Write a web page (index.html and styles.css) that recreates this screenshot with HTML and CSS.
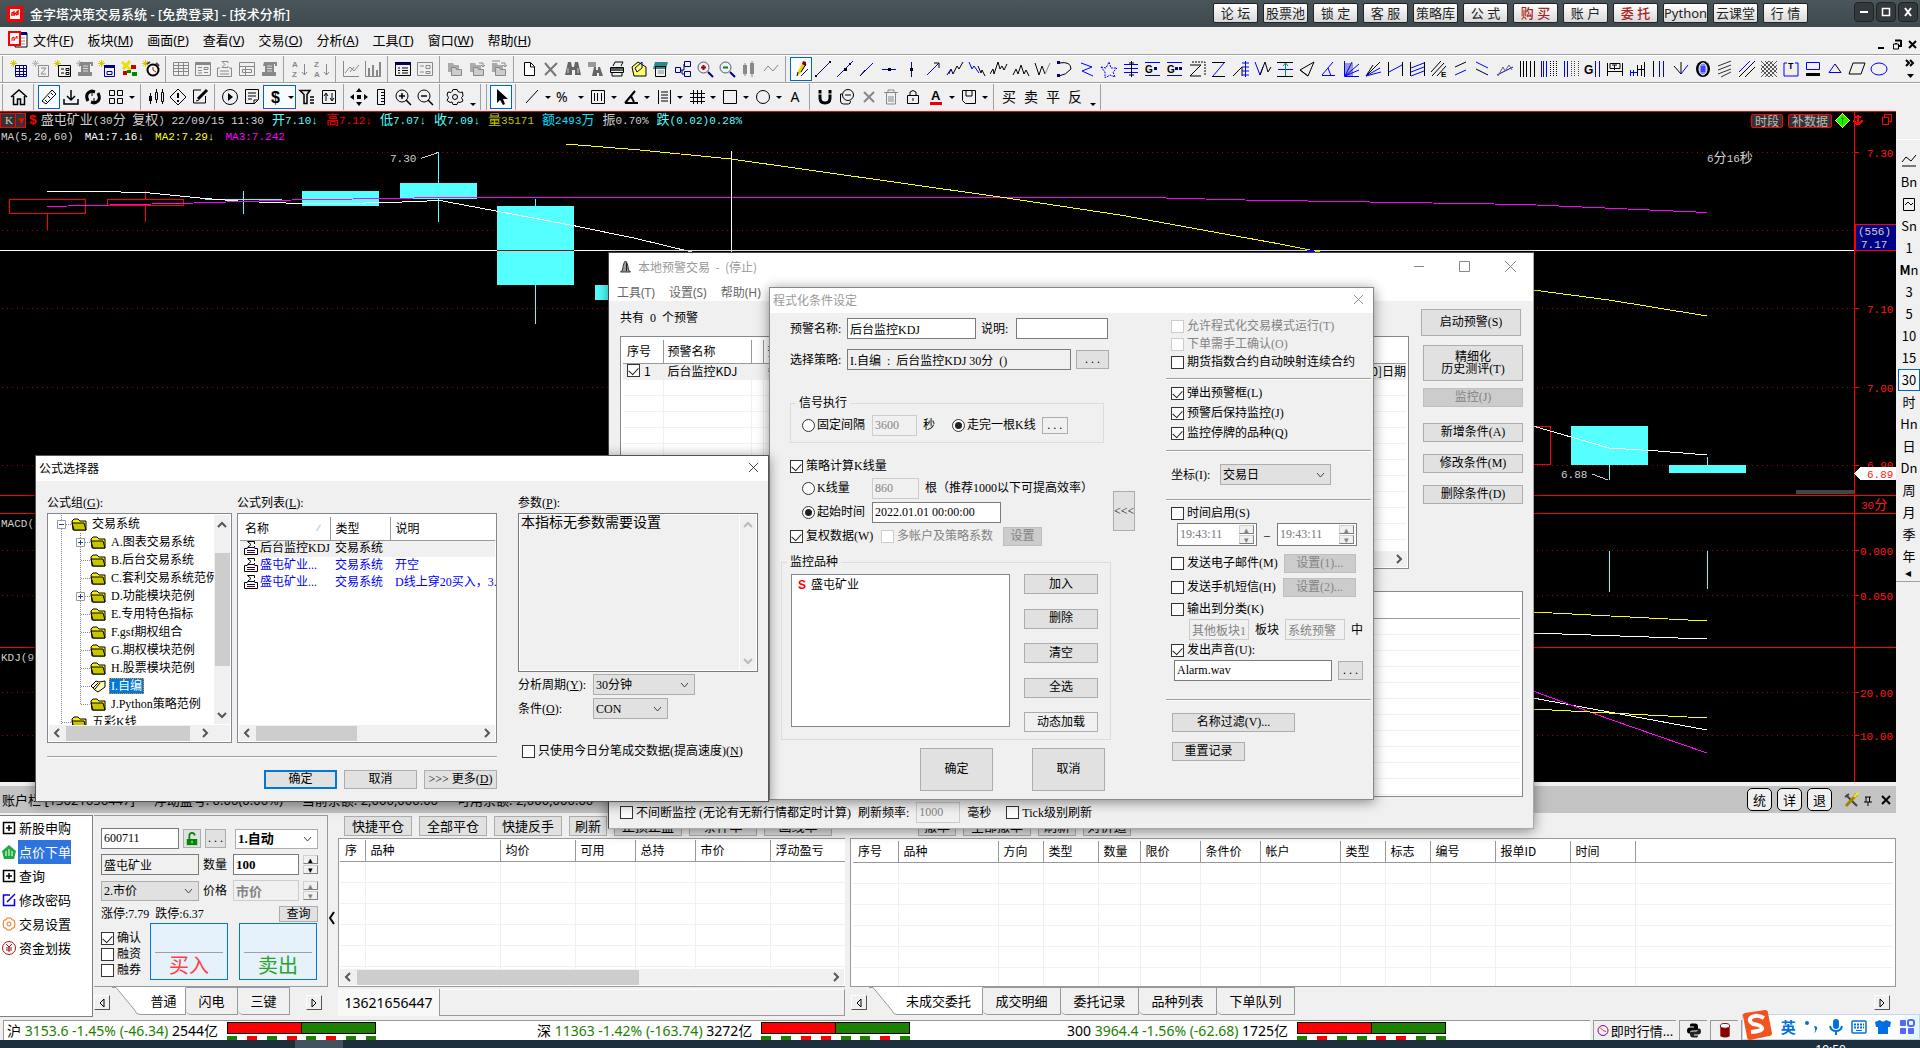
FILE: index.html
```html
<!DOCTYPE html>
<html lang="zh-CN">
<head>
  <meta charset="UTF-8" />
  <title>金字塔决策交易系统</title>
  <link rel="stylesheet" href="styles.css">
</head>
<body>

  <!-- shared symbols -->
  <svg class="sprite">
    <symbol id="close" viewBox="0 0 12 12"><path d="M1 1l10 10M11 1L1 11" fill="none" stroke="currentColor"/></symbol>
    <symbol id="left" viewBox="0 0 8 10"><path d="M6 1L2 5l4 4" fill="none" stroke="#555" stroke-width="2"/></symbol>
    <symbol id="right" viewBox="0 0 8 10"><path d="M2 1l4 4-4 4" fill="none" stroke="#555" stroke-width="2"/></symbol>
    <symbol id="up" viewBox="0 0 10 8"><path d="M1 6l4-4 4 4" fill="none" stroke="currentColor" stroke-width="2"/></symbol>
    <symbol id="down" viewBox="0 0 10 8"><path d="M1 2l4 4 4-4" fill="none" stroke="currentColor" stroke-width="2"/></symbol>
    <symbol id="tri-l" viewBox="0 0 6 10"><path d="M5 1v8L1 5z" fill="none" stroke="#000"/></symbol>
    <symbol id="tri-r" viewBox="0 0 6 10"><path d="M1 1v8l4-4z" fill="none" stroke="#000"/></symbol>
    <symbol id="folder" viewBox="0 0 17 13"><path d="M1 3l2-2h4l2 2h6v9H2z" fill="#f4f000" stroke="#000"/><path d="M1 5h12l2 7H3z" fill="#c9c400" stroke="#000"/></symbol>
    <symbol id="open" viewBox="0 0 17 13"><path d="M1 6l5-5 3 1 6-1v6l-7 5-3-2z" fill="#fffbb0" stroke="#000"/><path d="M3 8l5-5M5 9l5-6" stroke="#000" fill="none"/></symbol>
    <symbol id="line" viewBox="0 0 21 18"><path d="M11.500 0v18M12 9.500h9" fill="none" stroke="#888" stroke-dasharray="1 1"/></symbol>
    <symbol id="line-end" viewBox="0 0 21 18"><path d="M11.500 0v9.500h9" fill="none" stroke="#888" stroke-dasharray="1 1"/></symbol>
    <symbol id="line-plus" viewBox="0 0 21 18"><path d="M11.500 0v18M16 9.500h5" fill="none" stroke="#888" stroke-dasharray="1 1"/><path d="M7.500 5.500h8v8h-8z" fill="#fff" stroke="#999"/><path d="M9 9.500h5M11.500 7v5" stroke="#248"/></symbol>
    <symbol id="line-minus" viewBox="0 0 21 18"><path d="M11.500 0v18M16 9.500h5" fill="none" stroke="#888" stroke-dasharray="1 1"/><path d="M7.500 5.500h8v8h-8z" fill="#fff" stroke="#999"/><path d="M9 9.500h5" stroke="#248"/></symbol>
    <symbol id="sigma" viewBox="0 0 14 14"><path d="M3.500 7.500h-3v6h13v-6h-3" fill="#fff" stroke="#000"/><path d="M10.500 3V.5h-7l3.500 3-3.500 3h7V5" fill="none" stroke="#000"/><path d="M3 9.500h8" stroke="#008"/><path d="M3 11.500h8" stroke="#600"/></symbol>
  </svg>

  <header class="titlebar">
    <svg class="logo" viewBox="0 0 16 16"><path fill="#f00" d="M0 0h16v16H0z"/><path fill="#fff" d="M3 3h10v10H3z"/><path d="M5 10V7l2-1v4M7 9l4-4v3l-2 1" fill="none" stroke="#f00" stroke-width="1.500"/></svg>
    <div class="app-name">金字塔决策交易系统 - [免费登录] - [技术分析]</div>
    <nav class="quick">
      <button>论 坛</button><button>股票池</button><button>锁 定</button><button>客 服</button><button>策略库</button><button>公 式</button><button class="hot">购 买</button><button>账 户</button><button class="hot">委 托</button><button>Python</button><button>云课堂</button><button>行 情</button>
    </nav>
    <div class="win-btns">
      <button aria-label="最小化"><svg viewBox="0 0 12 12"><path d="M2 6h8" stroke="#fff" stroke-width="2"/></svg></button>
      <button aria-label="最大化"><svg viewBox="0 0 12 12"><path d="M2.500 2.500h7v7h-7z" fill="none" stroke="#fff" stroke-width="1.500"/></svg></button>
      <button aria-label="关闭"><svg viewBox="0 0 12 12"><path d="M3 2l6 8M9 2L3 10" stroke="#fff" stroke-width="2"/></svg></button>
    </div>
  </header>

  <nav class="menubar">
    <svg class="doc-logo" viewBox="0 0 20 18"><path d="M7 2h12v14H7z" fill="#fff" stroke="#000"/><path d="M7 1h12v3H7z" fill="#008"/><path d="M13 7h4M13 10h4M13 13h4" stroke="#888"/><path d="M1 1h11v13H1z" fill="#fff" stroke="#f00" stroke-width="2"/><path d="M4 10V7l2-1v4M6 9l3-4v3" stroke="#f00" fill="none"/></svg>
    <a href="#">文件(<u>F</u>)</a><a href="#">板块(<u>M</u>)</a><a href="#">画面(<u>P</u>)</a><a href="#">查看(<u>V</u>)</a><a href="#">交易(<u>O</u>)</a><a href="#">分析(<u>A</u>)</a><a href="#">工具(<u>T</u>)</a><a href="#">窗口(<u>W</u>)</a><a href="#">帮助(<u>H</u>)</a>
    <svg class="mdi" viewBox="0 0 40 12"><path d="M1 9h6M18 1.500h6M19 7V4M24 1v6h-2" stroke="#000" stroke-width="2" fill="none"/><path d="M16.500 5h5v5h-5z" fill="#f0f0f0" stroke="#000"/><path d="M32 2l7 7M39 2l-7 7" stroke="#000" stroke-width="2"/></svg>
  </nav>
  <div class="toolbar" id="drawBar"></div>
  <div class="toolbar second" id="chartBar"></div>

  <div class="workspace">
    <div class="left-side">

      <section class="chart">
        <svg class="plot" viewBox="0 111 1896 671" preserveAspectRatio="xMinYMin slice">
          <g class="dots">
            <path d="M2 152.500h1852M2 230.500h1852M2 308.500h1852M2 387.500h1852M2 465.500h1852M2 550.500h1852M2 595.500h1852M2 692.500h1852M2 735.500h1852"/>
          </g>
          <g class="axis">
            <path d="M0 111.500h1896M1854.500 111v671M0 495.500h1896M0 513.500h1896M0 647.500h1896M1854 152.500h5M1854 308.500h5M1854 387.500h5M1854 465.500h5M1854 550.500h5M1854 595.500h5M1854 692.500h5M1854 735.500h5"/>
          </g>
          <g class="up-bar">
            <path d="M9.500 199.500h76v14h-76zM47.500 214v16M107.500 199.500h76v6h-76zM145.500 191v8M145.500 206v16M1473.500 426.500h77v38h-77z"/>
          </g>
          <g class="down-bar">
            <path d="M205 199h77v1h-77zM243 191h1v23h-1zM302 191h77v15h-77zM400 183h77v16h-77zM438 152h1v70h-1zM497 206h77v79h-77zM535 199h1v125h-1zM595 285h77v15h-77zM1571 426h77v39h-77zM1609 465h1v15h-1zM1669 465h77v8h-77zM1707 457h1v8h-1zM1609 551h1v41h-1zM1707 551h1v38h-1z"/>
          </g>
          <g class="ma">
            <path stroke="#fff" d="M47 191.500h50l48 1 60 6 40 3 55 2h40l50-1 50-2 133 25 63 13 58 14M1474 405l59 21 76 22 49 3 49 4M1400 630l133 3 174 6M1480 686l53 12 76 14 98 18"/>
            <path stroke="#f0f" d="M47 206.500l147-3.500 98-3 122-2 186-.5h546l99 2.500 280 4.500 182 8M1480 667l53 24 76 28 98 34"/>
            <path stroke="#ff0" d="M566 144l74 6 91 9 269 38 120 18 160 29 40 8 213 38 76 10 98 16M1400 604l133 8 174 9M1480 704l53 5 76 4 98 5"/>
            <path stroke="#fff" d="M0 250.500h1854M731.500 151v102"/>
            <path stroke="#a00" d="M497 250.500h77"/><path stroke="#00f" stroke-width="2" d="M1307 250.500h7"/>
            <path stroke="#ccc" d="M421 158.500l17-6M1592 474l16 6"/>
          </g>
          <path fill="#444" d="M1796 490h58v4h-58z"/>
          <path fill="#000084" stroke="#f00" d="M1855.500 224.500h40v26h-40z"/>
          <path fill="#000084" d="M1894 225h2v25h-2z"/>
          <g class="quote">
            <text x="390" y="162">7.30</text><text x="1561" y="478">6.88</text>
            <text x="1707" y="162">6<tspan class="zh">分</tspan>16<tspan class="zh">秒</tspan></text>
            <text x="1858" y="235">(556)</text><text x="1861" y="248">7.17</text>
            <text x="1" y="527">MACD(12,26,9)</text><text x="1" y="661">KDJ(9,3,3)</text>
          </g>
          <g class="quote red">
            <text x="1867" y="157">7.30</text><text x="1867" y="313">7.10</text><text x="1867" y="392">7.00</text><text x="1867" y="469">6.90</text>
            <text x="1861" y="509">30<tspan class="zh">分</tspan></text>
            <text x="1860" y="555">0.000</text><text x="1860" y="600">0.050</text><text x="1860" y="697">20.00</text><text x="1860" y="740">10.00</text>
            <path d="M1854 473l6-6h36v13h-36z" fill="#fff"/><text x="1867" y="478">6.89</text>
          </g>
          <path d="M1842.500 113.500l7 7-7 7-7-7z" fill="#0f0" stroke="#ff0"/><path d="M1842.500 117v7M1841 118h3" stroke="#a50"/>
          <path d="M1855 117h6M1858 115v9M1854 120c1 5 7 5 8 0" fill="none" stroke="#f00" stroke-width="2"/>
          <path d="M1882.500 117.500h6v7h-6zM1884 116.500v-2h7v7h-2" fill="none" stroke="#f00"/>
        </svg>
        <div class="chart-head">
          <div class="info">
            <button class="kbtn">K<i>▾</i></button><b class="dollar">$</b>
            <span><span class="zh">盛屯矿业</span>(30<span class="zh">分</span> <span class="zh">复权</span>) 22/09/15 11:30</span>
            <span class="cyan first"><span class="zh">开</span>7.10<b>↓</b></span>
            <span class="red"><span class="zh">高</span>7.12<b>↓</b></span>
            <span class="cyan"><span class="zh">低</span>7.07<b>↓</b></span>
            <span class="cyan"><span class="zh">收</span>7.09<b>↓</b></span>
            <span class="olive"><span class="zh">量</span>35171</span>
            <span class="blue"><span class="zh">额</span>2493<span class="zh">万</span></span>
            <span><span class="zh">振</span>0.70%</span>
            <span class="cyan"><span class="zh">跌</span>(0.02)0.28%</span>
            <div class="tags"><button class="tag">时段</button><button class="tag">补数据</button></div>
          </div>
          <div class="info avg">
            <span>MA(5,20,60)</span><span class="white">MA1:7.16<b>↓</b></span><span class="yellow">MA2:7.29<b>↓</b></span><span class="pink">MA3:7.242</span>
          </div>
        </div>
      </section>

      <section class="dock">
        <div class="account-bar">
          <span>账户栏 [13621656447]</span><span>浮动盈亏: 0.00(0.00%)</span><span>当前余额: 2,000,000.00</span><span>可用余额: 2,000,000.00</span>
          <div class="account-btns">
            <button>统</button><button>详</button><button>退</button>
            <svg class="tools" viewBox="0 0 48 16"><path d="M3 3l11 11M2 5l4-3" stroke="#444" stroke-width="2"/><path d="M14 2L3 14" stroke="#998800" stroke-width="3"/><path d="M11 5l4-4" stroke="#fe0" stroke-width="2"/><path d="M22 5h6M23 5v5M26.500 5v5M21 10h8M25 10v4" stroke="#000" fill="none"/><path d="M39 4l8 8M47 4l-8 8" stroke="#000" stroke-width="2"/></svg>
          </div>
        </div>
        <div class="dock-body">
          <ul class="side-menu">
            <li><svg viewBox="0 0 14 14"><path d="M1.500 1.500h11v11h-11zM7 4v6M4 7h6" fill="none" stroke="#000" stroke-width="1.500"/></svg><span>新股申购</span></li>
            <li class="active"><svg viewBox="0 0 14 14"><path d="M7 0l7 6-2 8H2L0 6z" fill="#1faa3c"/><path d="M4 6v5M7 4v7M10 6v5" stroke="#fff"/></svg><span>点价下单</span></li>
            <li><svg viewBox="0 0 14 14"><path d="M1.500 1.500h11v11h-11zM7 4v6M4 7h6" fill="none" stroke="#000" stroke-width="1.500"/></svg><span>查询</span></li>
            <li><svg viewBox="0 0 14 14"><path d="M8 2H1.500v10.500h11V6M5 9l8-8" fill="none" stroke="#00f" stroke-width="1.500"/></svg><span>修改密码</span></li>
            <li><svg viewBox="0 0 14 14"><path d="M5 1h4l1 2h2l1 4-1 4h-2l-1 2H5l-1-2H2L1 7l1-4h2z" fill="none" stroke="#f07010"/><circle cx="7" cy="7" r="2" fill="none" stroke="#f07010"/></svg><span>交易设置</span></li>
            <li><svg viewBox="0 0 14 14"><circle cx="7" cy="7" r="6.500" fill="none" stroke="#a11"/><path d="M4 3l3 3 3-3M7 6v5M4 7h6M4 9h6" fill="none" stroke="#a11"/></svg><span>资金划拨</span></li>
          </ul>

          <div class="order">
            <form class="order-form">
              <div class="line">
                <input class="w78" aria-label="代码" value="600711"><button type="button" class="btn lock" aria-label="锁定"><svg viewBox="0 0 14 16"><path d="M4 8V4c0-4 6-4 6 0" fill="none" stroke="#080" stroke-width="2"/><path d="M1 8h12v7H1z" fill="#080"/><path d="M7 10v3" stroke="#fff"/></svg></button><button type="button" class="btn dots3">. . .</button>
                <select class="strong push" aria-label="方式"><option>1.自动</option></select>
              </div>
              <div class="line">
                <input class="w98 flat" aria-label="名称" value="盛屯矿业" readonly><label for="qty">数量</label><input id="qty" class="w66 strong" value="100"><span class="spin"><button type="button">▴</button><button type="button">▾</button></span>
              </div>
              <div class="line">
                <select class="w98 flat" aria-label="价格类型"><option>2.市价</option></select><label for="price">价格</label><input id="price" class="w66 strong" value="市价" disabled><span class="spin off"><button type="button">▴</button><button type="button">▾</button></span>
              </div>
              <div class="limit"><span>涨停:7.79&nbsp; 跌停:6.37</span><button type="button" class="btn">查询</button></div>
              <div class="deal">
                <div class="checks">
                  <label><input type="checkbox" checked>确认</label><label><input type="checkbox">融资</label><label><input type="checkbox">融券</label>
                </div>
                <button type="button" class="buy">买入</button><button type="button" class="sell">卖出</button>
              </div>
            </form>
            <div class="tabs">
              <button class="arrow" aria-label="左"><svg viewBox="0 0 6 10"><use href="#tri-l"/></svg></button>
              <svg class="slope" viewBox="0 0 30 28"><path d="M0 0h30v27.500h-2q-4 0-5-4L4 .5z" fill="#fff"/><path d="M0 .5h4l19 23q1 4 5 4h2" fill="none" stroke="#999"/></svg><button class="tab on short">普通</button><button class="tab short">闪电</button><button class="tab short">三键</button>
              <button class="arrow end" aria-label="右"><svg viewBox="0 0 6 10"><use href="#tri-r"/></svg></button>
            </div>
          </div>

          <button class="collapse" aria-label="收起"><svg viewBox="0 0 8 14"><path d="M6 1L2 7l4 6" fill="none" stroke="#000" stroke-width="2"/></svg></button>

          <div class="lists">
            <div class="list-tools">
              <button class="btn">快捷平仓</button><button class="btn">全部平仓</button><button class="btn">快捷反手</button><button class="btn small">刷新</button><button class="btn">止损止盈</button><button class="btn">条件单</button><button class="btn">画线单</button>
              <button class="btn small gap">撤单</button><button class="btn">全部撤单</button><button class="btn small">刷新</button><button class="btn mid">对价追</button>
            </div>
            <div class="list-row">
              <div class="positions">
                <div class="frame">
                  <table class="grid" data-blank="6">
                    <colgroup><col class="c25"><col class="c135"><col class="c75"><col class="c60"><col class="c60"><col class="c75"><col></colgroup>
                    <thead><tr><th>序</th><th>品种</th><th>均价</th><th>可用</th><th>总持</th><th>市价</th><th>浮动盈亏</th></tr></thead>
                    <tbody></tbody>
                  </table>
                  <div class="hbar"><svg viewBox="0 0 8 10"><use href="#left"/></svg><i class="wide"></i><svg viewBox="0 0 8 10"><use href="#right"/></svg></div>
                </div>
                <div class="acct-tab"><button>13621656447</button><span></span></div>
              </div>
              <div class="orders">
                <div class="frame">
                  <table class="grid" data-blank="6">
                    <colgroup><col class="c45"><col class="c100"><col class="c45"><col class="c55"><col class="c42"><col class="c60"><col class="c60"><col class="c80"><col class="c45"><col class="c45"><col class="c65"><col class="c75"><col class="c65"><col></colgroup>
                    <thead><tr><th>序号</th><th>品种</th><th>方向</th><th>类型</th><th>数量</th><th>限价</th><th>条件价</th><th>帐户</th><th>类型</th><th>标志</th><th>编号</th><th>报单ID</th><th>时间</th><th></th></tr></thead>
                    <tbody></tbody>
                  </table>
                </div>
                <div class="tabs">
                  <button class="arrow" aria-label="左"><svg viewBox="0 0 6 10"><use href="#tri-l"/></svg></button>
                  <svg class="slope" viewBox="0 0 30 28"><path d="M0 0h30v27.500h-2q-4 0-5-4L4 .5z" fill="#fff"/><path d="M0 .5h4l19 23q1 4 5 4h2" fill="none" stroke="#999"/></svg><button class="tab on">未成交委托</button><button class="tab">成交明细</button><button class="tab">委托记录</button><button class="tab">品种列表</button><button class="tab">下单队列</button>
                  <button class="arrow end" aria-label="右"><svg viewBox="0 0 6 10"><use href="#tri-r"/></svg></button>
                </div>
              </div>
            </div>
          </div>
        </div>
      </section>
    </div>

    <aside class="periods">
      <button aria-label="分时"><svg viewBox="0 0 16 14"><path d="M1 9l4-5 5 4 5-6M1 13h14" fill="none" stroke="#000"/></svg></button>
      <button>Bn</button>
      <button aria-label="走势"><svg viewBox="0 0 16 14"><path d="M2.500 1.500h11v12h-11zM4 8l3-3 3 3 2-2" fill="none" stroke="#000"/></svg></button>
      <button>Sn</button><button>1</button><button><b>M</b>n</button><button>3</button><button>5</button><button>10</button><button>15</button><button class="on">30</button><button>时</button><button>Hn</button><button>日</button><button>Dn</button><button>周</button><button>月</button><button>季</button><button>年</button>
      <span class="more">◂</span>
    </aside>
  </div>

  <footer class="status">
    <div class="indexes">
      <div class="index"><span>沪 <em>3153.6 -1.45% (-46.34)</em> 2544亿</span><div class="meter"><p><i></i><i></i></p><p><i></i><i class="r"></i><i></i><i class="r"></i><i></i><i class="r"></i><i></i><i></i></p></div></div>
      <div class="index"><span>深 <em>11363 -1.42% (-163.74)</em> 3272亿</span><div class="meter"><p><i></i><i></i></p><p><i></i><i></i><i class="r"></i><i class="r"></i><i></i><i></i><i class="r"></i><i></i></p></div></div>
      <div class="index"><span>300 <em>3964.4 -1.56% (-62.68)</em> 1725亿</span><div class="meter"><p><i></i><i></i></p><p><i></i><i class="r"></i><i></i><i></i><i class="r"></i><i class="r"></i><i></i><i></i></p></div></div>
    </div>
    <div class="cell news"><svg viewBox="0 0 12 12"><circle cx="6" cy="6" r="5" fill="none" stroke="#808"/><path d="M6 6L3 3M6 6l3 1" stroke="#c36"/></svg>即时行情...</div>
    <div class="cell"><svg viewBox="0 0 14 14"><path d="M4 0h4q3 0 3 3v3q0 1-3 1H5q-2 0-2 3H2q-2 0-2-3t3-3h4V3H3V1z" fill="#000"/><path d="M10 14H6q-3 0-3-3V9q0-1 3-1h3q2 0 2-3h1q2 0 2 3t-3 3H7v1h4v1z" fill="#222"/></svg></div>
    <div class="cell"><svg viewBox="0 0 14 16"><path d="M2 3v11q5 3 10 0V3" fill="#800"/><ellipse cx="7" cy="3" rx="5" ry="2.500" fill="#fff" stroke="#800"/></svg></div>
    <div class="cell tail"></div>
  </footer>
  <div class="taskbar"><i></i><span>19:50</span></div>

  <div class="ime">
    <svg class="sogou" viewBox="0 0 32 30"><path d="M2 6Q1 4 4 3L24 0q3 0 3 3l4 20q0 3-3 3L9 30q-3 0-3-3z" fill="#f4521e"/><path d="M23 8q-7-4-12-1t1 7q8 1 9 4t-11 4" fill="none" stroke="#fff" stroke-width="4"/></svg>
    <b>英</b>
    <svg viewBox="0 0 16 16"><circle cx="3" cy="4" r="2" fill="#0070e0"/><path d="M10 7q4 0 3 3t-3 4q2-2 1-4z" fill="#0070e0"/></svg>
    <svg viewBox="0 0 16 16"><rect x="5" y="0" width="6" height="10" rx="3" fill="#0070e0"/><path d="M2 7q1 5 6 5t6-5M8 12v4" fill="none" stroke="#0070e0" stroke-width="2"/></svg>
    <svg viewBox="0 0 16 16"><rect x="1" y="2" width="14" height="12" rx="1" fill="none" stroke="#0070e0" stroke-width="1.500"/><path d="M3 5.500h10M3 8.500h10" stroke="#0070e0" stroke-width="2" stroke-dasharray="2 1"/><path d="M5 11.500h6" stroke="#0070e0"/></svg>
    <svg viewBox="0 0 16 16"><path d="M0 3l5-2q3 3 6 0l5 2-1 5h-2v7H3V8H1z" fill="#0070e0"/></svg>
    <svg viewBox="0 0 16 16"><rect x="1" y="1" width="6" height="6" rx="1" fill="#56f"/><rect x="9" y="1" width="6" height="6" rx="2" fill="none" stroke="#56f" stroke-width="2"/><rect x="1" y="9" width="6" height="6" rx="1" fill="#56f"/><rect x="9" y="9" width="6" height="6" rx="1" fill="#56f"/></svg>
  </div>

  <!-- alert window -->
  <div class="window alert-win">
    <div class="caption faded">
      <svg class="bell" viewBox="0 0 12 14"><path d="M6 1q2 1 3 9l2 2H1l2-2Q4 2 6 1z" fill="#999" stroke="#333"/><path d="M7 3v8" stroke="#222"/></svg>
      <span>本地预警交易&nbsp; -&nbsp; (停止)</span>
      <svg class="ctl" viewBox="0 0 102 12"><path d="M0 5.500h10M45.500 .5h10v10h-10zM91 0l11 11M102 0L91 11" fill="none" stroke="#888"/></svg>
    </div>
    <nav class="win-menu"><a href="#">工具(T)</a><a href="#">设置(S)</a><a href="#">帮助(H)</a></nav>
    <div class="alert-body">
      <div class="alert-main">
        <p>共有&nbsp; 0&nbsp; 个预警</p>
        <div class="alert-list">
          <table class="grid fine" data-blank="11">
            <colgroup><col class="c40"><col class="c88"><col class="c12"><col></colgroup>
            <thead><tr><th>序号</th><th>预警名称</th><th></th><th>预警条件</th></tr></thead>
            <tbody><tr class="sel"><td><label><input type="checkbox" checked>1</label></td><td>后台监控KDJ</td><td></td><td class="split"><span>条件</span><span>[0]日期</span></td></tr></tbody>
          </table>
          <div class="hbar"><svg viewBox="0 0 8 10"><use href="#left"/></svg><i></i><svg viewBox="0 0 8 10"><use href="#right"/></svg></div>
        </div>
      </div>
      <div class="alert-side">
        <button class="btn tall">启动预警(S)</button>
        <button class="btn taller">精细化<br>历史测评(T)</button>
        <button class="btn" disabled>监控(J)</button>
        <button class="btn">新增条件(A)</button>
        <button class="btn">修改条件(M)</button>
        <button class="btn">删除条件(D)</button>
      </div>
    </div>
    <div class="log">
      <table class="grid fine" data-blank="11"><thead><tr><th></th></tr></thead><tbody></tbody></table>
    </div>
    <div class="alert-foot">
      <label><input type="checkbox">不间断监控 (无论有无新行情都定时计算)</label><label for="freq">刷新频率:</label><input id="freq" value="1000" disabled><span>毫秒</span>
      <label class="tick"><input type="checkbox">Tick级别刷新</label>
    </div>
  </div>

  <!-- condition window -->
  <div class="window cond-win">
    <div class="caption faded"><span>程式化条件设定</span><svg class="x" viewBox="0 0 12 12"><use href="#close"/></svg></div>
    <div class="cond-body">
      <div class="cond-left">
        <div class="row"><label class="key" for="alertName">预警名称:</label><input id="alertName" class="w129" value="后台监控KDJ"><label class="note" for="note">说明:</label><input id="note" class="w92"></div>
        <div class="row strategy"><label class="key" for="plan">选择策略:</label><input id="plan" class="flat grow" value="I.自编  :  后台监控KDJ 30分  ()" readonly><button class="btn w33">. . .</button></div>
        <fieldset class="signal">
          <legend>信号执行</legend>
          <div class="row"><label class="opt"><input type="radio" name="sig">固定间隔</label><input class="w45" aria-label="间隔" value="3600" disabled><span>秒</span><label class="late"><input type="radio" name="sig" checked>走完一根K线</label><button class="btn light">. . .</button></div>
        </fieldset>
        <div class="row calc"><label><input type="checkbox" checked>策略计算K线量</label></div>
        <div class="row indent"><label class="opt"><input type="radio" name="range">K线量</label><input class="w47" aria-label="K线量" value="860" disabled><span>根（推荐1000以下可提高效率）</span></div>
        <div class="row indent"><label class="opt"><input type="radio" name="range" checked>起始时间</label><input class="w129" aria-label="起始时间" value="2022.01.01 00:00:00"></div>
        <div class="row"><label class="right-check"><input type="checkbox" checked>复权数据(W)</label><label class="off"><input type="checkbox" disabled>多帐户及策略系数</label><button class="btn w39" disabled>设置</button></div>
        <fieldset class="symbols">
          <legend>监控品种</legend>
          <div class="pick">
            <ul><li><b>S</b> 盛屯矿业</li></ul>
            <div class="pick-btns"><button class="btn">加入</button><button class="btn">删除</button><button class="btn">清空</button><button class="btn">全选</button><button class="btn light">动态加载</button></div>
          </div>
        </fieldset>
        <div class="confirm"><button class="btn">确定</button><button class="btn">取消</button></div>
      </div>
      <button class="btn fold">&lt;&lt;&lt;</button>
      <div class="cond-right">
        <label class="r18 off"><input type="checkbox" disabled>允许程式化交易模式运行(T)</label>
        <label class="r18 off"><input type="checkbox" disabled>下单需手工确认(O)</label>
        <label class="r18"><input type="checkbox">期货指数合约自动映射连续合约</label>
        <hr>
        <label><input type="checkbox" checked>弹出预警框(L)</label>
        <label><input type="checkbox" checked>预警后保持监控(J)</label>
        <label><input type="checkbox" checked>监控停牌的品种(Q)</label>
        <hr>
        <div class="row coord"><label for="coord">坐标(I):</label><select id="coord" class="flat"><option>交易日</option></select></div>
        <hr>
        <label><input type="checkbox">时间启用(S)</label>
        <div class="row times"><span class="time"><input aria-label="开始" value="19:43:11"><span class="spin off"><button>▴</button><button>▾</button></span></span><span>–</span><span class="time"><input aria-label="结束" value="19:43:11"><span class="spin off"><button>▴</button><button>▾</button></span></span></div>
        <div class="row send"><label><input type="checkbox">发送电子邮件(M)</label><button class="btn" disabled>设置(1)...</button></div>
        <div class="row send"><label><input type="checkbox">发送手机短信(H)</label><button class="btn" disabled>设置(2)...</button></div>
        <label><input type="checkbox">输出到分类(K)</label>
        <div class="row group"><input aria-label="分类" value="其他板块1" disabled><span>板块</span><input aria-label="板块" value="系统预警" disabled><span>中</span></div>
        <label><input type="checkbox" checked>发出声音(U):</label>
        <div class="row sound"><input aria-label="声音" value="Alarm.wav"><button class="btn">. . .</button></div>
        <hr class="far">
        <button class="btn filter">名称过滤(V)...</button>
        <button class="btn reset">重置记录</button>
      </div>
    </div>
  </div>

  <!-- formula picker -->
  <div class="window formula-win">
    <div class="caption"><span>公式选择器</span><svg class="x" viewBox="0 0 12 12"><use href="#close"/></svg></div>
    <div class="formula-body">
      <div class="formula-left">
        <div class="panes">
          <div class="pane tree-pane">
            <p>公式组(<u>G</u>):</p>
            <div class="box tree-box">
              <ul class="tree">
                <li class="root"><svg><use href="#line-minus"/></svg><svg><use href="#folder"/></svg><span>交易系统</span></li>
                <li><svg><use href="#line-plus"/></svg><svg><use href="#folder"/></svg><span>A.图表交易系统</span></li>
                <li><svg><use href="#line"/></svg><svg><use href="#folder"/></svg><span>B.后台交易系统</span></li>
                <li><svg><use href="#line"/></svg><svg><use href="#folder"/></svg><span>C.套利交易系统范例</span></li>
                <li><svg><use href="#line-plus"/></svg><svg><use href="#folder"/></svg><span>D.功能模块范例</span></li>
                <li><svg><use href="#line"/></svg><svg><use href="#folder"/></svg><span>E.专用特色指标</span></li>
                <li><svg><use href="#line"/></svg><svg><use href="#folder"/></svg><span>F.gsf期权组合</span></li>
                <li><svg><use href="#line"/></svg><svg><use href="#folder"/></svg><span>G.期权模块范例</span></li>
                <li><svg><use href="#line"/></svg><svg><use href="#folder"/></svg><span>H.股票模块范例</span></li>
                <li class="active"><svg><use href="#line"/></svg><svg><use href="#open"/></svg><span>I.自编</span></li>
                <li><svg><use href="#line-end"/></svg><svg><use href="#folder"/></svg><span>J.Python策略范例</span></li>
                <li class="root"><svg><use href="#line"/></svg><svg><use href="#folder"/></svg><span>五彩K线</span></li>
              </ul>
              <div class="vbar"><svg viewBox="0 0 10 8"><use href="#up"/></svg><i></i><svg viewBox="0 0 10 8"><use href="#down"/></svg></div>
              <div class="hbar"><svg viewBox="0 0 8 10"><use href="#left"/></svg><i></i><svg viewBox="0 0 8 10"><use href="#right"/></svg></div>
            </div>
          </div>
          <div class="pane list-pane">
            <p>公式列表(<u>L</u>):</p>
            <div class="box list-box">
              <table class="formulas">
                <colgroup><col class="c90"><col class="c60"><col></colgroup>
                <thead><tr><th>名称<i>∕</i></th><th>类型</th><th>说明</th></tr></thead>
                <tbody>
                  <tr class="sel"><td><svg viewBox="0 0 14 14"><use href="#sigma"/></svg>后台监控KDJ</td><td>交易系统</td><td></td></tr>
                  <tr><td><svg viewBox="0 0 14 14"><use href="#sigma"/></svg>盛屯矿业...</td><td>交易系统</td><td>开空</td></tr>
                  <tr><td><svg viewBox="0 0 14 14"><use href="#sigma"/></svg>盛屯矿业...</td><td>交易系统</td><td>D线上穿20买入，3.</td></tr>
                </tbody>
              </table>
              <div class="hbar"><svg viewBox="0 0 8 10"><use href="#left"/></svg><i></i><svg viewBox="0 0 8 10"><use href="#right"/></svg></div>
            </div>
          </div>
        </div>
        <hr>
        <div class="formula-btns"><button class="btn primary">确定</button><button class="btn">取消</button><button class="btn">&gt;&gt;&gt; 更多(<u>D</u>)</button></div>
      </div>
      <div class="formula-right">
        <p>参数(<u>P</u>):</p>
        <div class="params"><span>本指标无参数需要设置</span><div class="vbar"><svg viewBox="0 0 10 8"><use href="#up"/></svg><svg viewBox="0 0 10 8"><use href="#down"/></svg></div></div>
        <div class="row"><label for="cycle">分析周期(<u>Y</u>):</label><select id="cycle" class="flat w102"><option>30分钟</option></select></div>
        <div class="row"><label for="cond">条件(<u>O</u>):</label><select id="cond" class="flat w75"><option>CON</option></select></div>
        <label class="today"><input type="checkbox">只使用今日分笔成交数据(提高速度)(<u>N</u>)</label>
      </div>
    </div>
  </div>

  <script src="script.js"></script>
</body>
</html>
```

FILE: styles.css
```css
* { box-sizing: border-box; }
body {
  margin: 0;
  height: 100vh;
  display: flex;
  flex-direction: column;
  position: relative;
  overflow: hidden;
  background: #f0f0f0;
  color: #000;
  font: 12px/16px "Liberation Serif", "Noto Sans CJK SC", serif;
}
p, ul { margin: 0; padding: 0; list-style: none; }
svg { display: block; flex: none; }
a { color: inherit; text-decoration: none; }
button, input, select { font: inherit; color: inherit; margin: 0; border-radius: 0; }
button { padding: 0; white-space: nowrap; }
label, span { white-space: nowrap; }
i, em { font-style: normal; }
.sprite { position: absolute; width: 0; height: 0; }

/* top bars */
.titlebar, .menubar, .quick, .tabs, .index, .status, .account-bar, .acct-tab, .list-tools, .caption, .win-menu, .row {
  display: flex;
  align-items: center;
}
.titlebar {
  height: 27px;
  flex: none;
  padding-left: 7px;
  background: linear-gradient(#4a565b, #3e494e);
  color: #fff;
  font: 13px/18px "Noto Sans", "Noto Sans CJK SC", sans-serif;
}
.logo { width: 16px; height: 16px; margin-right: 7px; }
.app-name { font-weight: 500; }
.quick { margin-left: auto; gap: 5px; padding-bottom: 2px; }
.quick button {
  width: 45px;
  height: 20px;
  border: 1px solid #222;
  border-radius: 2px;
  background: linear-gradient(#fff, #d8d8d8);
  color: #222;
  line-height: 16px;
}
.quick .hot { color: #a22; font-weight: 500; }
.win-btns { display: flex; gap: 2px; margin: 0 2px 4px 46px; align-self: center; }
.win-btns button { width: 20px; height: 20px; border: 1px solid #222; border-radius: 4px; background: #33393c; padding: 3px; }
.menubar {
  height: 28px;
  flex: none;
  padding: 0 3px 2px 8px;
  gap: 14px;
  border-bottom: 1px solid #a0a0a0;
  font: 13px/18px "Noto Sans", "Noto Sans CJK SC", sans-serif;
}
.doc-logo { width: 20px; height: 18px; margin-right: -9px; }
.mdi { width: 40px; height: 12px; margin: 10px 0 0 auto; }
.toolbar {
  display: flex;
  align-items: center;
  flex: none;
  height: 28px;
  padding-left: 8px;
  border-bottom: 1px solid #a0a0a0;
  border-top: 1px solid #fff;
  overflow: hidden;
  background: linear-gradient(90deg, transparent 2px, #a0a0a0 2px, #a0a0a0 3px, transparent 3px);
}
.second { border-bottom: none; padding-bottom: 2px; }
.tool { width: 22px; height: 24px; border: 1px solid transparent; background: none; display: flex; align-items: center; justify-content: center; flex: none; font: 14px/18px "Noto Sans", "Noto Sans CJK SC", sans-serif; }
.tool svg { width: 18px; height: 18px; font-family: "Liberation Sans", sans-serif; }
.tool.on { border-color: #0067b8; background: #f8fbff; }
.tool.drop { width: 33px; justify-content: flex-start; padding-left: 2px; }
.tool.drop::after, .tail-arrow::after { content: ""; margin: 2px 0 0 auto; border: 3px solid transparent; border-top-color: #000; border-bottom: none; }
.tool.drop::after { margin-right: 1px; }
.sep { width: 8px; flex: none; height: 26px; background: linear-gradient(90deg, transparent 3px, #a0a0a0 3px, #a0a0a0 4px, transparent 4px); }
.tail-arrow { display: flex; justify-content: center; align-items: flex-end; width: 14px; height: 18px; flex: none; }
.tail-arrow::after { margin: 0; }
.grip { width: 10px; flex: none; height: 26px; border-left: 1px solid #a0a0a0; background: linear-gradient(90deg, transparent 5px, #a0a0a0 5px, #a0a0a0 6px, transparent 6px); }
.grip:last-child { background: none; }

/* chart */
.workspace { flex: 1; min-height: 0; display: flex; }
.left-side { flex: 1; min-width: 0; display: flex; flex-direction: column; }
.chart { flex: 1; min-height: 0; position: relative; background: #000; }
.plot { width: 100%; height: 100%; shape-rendering: crispEdges; }
.plot g path { fill: none; }
.dots path { stroke: #a00000; stroke-dasharray: 1 4; }
.axis path, .up-bar path { stroke: #f00; }
.plot .down-bar path { fill: #54ffff; }
.plot .quote path { fill: #fff; }
.quote { font: 11px "Liberation Mono", "Noto Sans CJK SC", monospace; fill: #d0d0d0; }
.quote.red { fill: #ff1a1a; }
.zh { font-size: 13px; }
.chart-head { position: absolute; left: 0; top: 1px; right: 42px; font: 11px/17px "Liberation Mono", "Noto Sans CJK SC", monospace; color: #d0d0d0; }
.info { display: flex; height: 17px; gap: 8px; align-items: center; white-space: pre; }
.info.avg { padding-left: 1px; gap: 11px; }
.kbtn { width: 26px; height: 15px; display: flex; border: 1px solid #f00; background: #333; color: #ccc; font: 11px/12px "Liberation Serif", serif; padding-left: 4px; justify-content: space-between; margin-right: -5px; }
.kbtn i { color: #f00; border-left: 1px solid #f00; width: 10px; }
.dollar { color: #f00; font-size: 13px; margin-right: -4px; }
.cyan { color: #54ffff; } .red { color: #f00; } .olive { color: #c0c000; } .blue { color: #00e0ff; } .white { color: #fff; } .yellow { color: #ff0; } .pink { color: #f0f; }
.tags { display: flex; gap: 5px; margin: 0 22px 0 auto; }
.tag { height: 14px; padding: 0 3px; border: 1px solid #f00; border-radius: 2px; background: #333; color: #bbb; font: 12px/12px "Noto Sans CJK SC", sans-serif; }

.periods { width: 24px; flex: none; align-self: flex-start; margin-top: 28px; padding-top: 9px; height: 443px; border-top: 1px solid #fff; border-bottom: 1px solid #a0a0a0; }
.periods button { display: flex; align-items: center; justify-content: center; width: 22px; height: 22px; margin-left: 2px; border: 1px solid transparent; background: none; font: 13px/18px "Noto Sans CJK SC", sans-serif; }
.periods svg { width: 16px; height: 14px; }
.periods .on { border-color: #0067b8; background: #f8f8f8; }
.more { display: block; text-align: center; line-height: 12px; }

/* account dock */
.dock { flex: none; padding-top: 4px; }
.account-bar { height: 27px; gap: 19px; padding-left: 2px; background: #c3c3c3; font: 13px/18px "Noto Sans", "Noto Sans CJK SC", sans-serif; }
.account-btns { display: flex; gap: 5px; margin-left: auto; align-items: center; }
.account-btns button { width: 25px; height: 23px; border: 1px solid #000; border-radius: 5px; background: #f0f0f0; }
.tools { width: 48px; height: 16px; margin: 0 5px 0 6px; }
.dock-body { display: flex; height: 207px; padding-top: 2px; }
.side-menu { width: 93px; height: 202px; padding: 0 0 0 2px; background: #fff; border: 1px solid #808080; border-left: none; font: 13px/24px "Noto Sans CJK SC", sans-serif; }
.side-menu li { display: flex; align-items: center; height: 24px; gap: 2px; }
.side-menu svg { width: 14px; height: 14px; }
.side-menu span { padding-left: 1px; }
.side-menu .active span { background: #2f74de; color: #fff; }
.order { width: 235px; flex: none; }
.order-form { height: 172px; margin-left: 1px; border: 1px solid #999; border-left: none; padding: 12px 9px 0 7px; }
.line { display: flex; align-items: center; height: 21px; margin-bottom: 5px; gap: 4px; }
.line select { height: 20px; width: 83px; }
.push { margin-left: auto; }
input, select { height: 21px; border: 1px solid #7a7a7a; background: #fff; padding: 0 2px; min-width: 0; }
input:disabled { border-color: #ccc; background: #f0f0f0; color: #838383; }
select {
  appearance: none;
  border-color: #adadad;
  background: #fff url("data:image/svg+xml,%3Csvg xmlns='http://www.w3.org/2000/svg' width='9' height='6'%3E%3Cpath d='M1 1l3.500 4 3.500-4' fill='none' stroke='%23444'/%3E%3C/svg%3E") no-repeat right 5px center;
}
.flat { background-color: #f0f0f0; }
select.flat { background-color: #e1e1e1; }
.strong { font-size: 13px; font-weight: bold; }
.w33 { width: 33px; } .w39 { width: 39px; } .w45 { width: 45px; } .w47 { width: 47px; } .w66 { width: 66px; } .w78 { width: 78px; } .w92 { width: 92px; } .w129 { width: 129px; }
.line .w98 { width: 98px; }
.line label { width: 26px; }
.w102 { width: 102px; } .w75 { width: 75px; }
.btn { border: 1px solid #adadad; background: #e1e1e1; height: 19px; line-height: 15px; }
.btn:disabled { border-color: #bfbfbf; background: #ccc; color: #838383; }
.btn.light { background: #f0f0f0; }
.lock { width: 18px; padding: 1px; }
.lock svg { width: 14px; height: 14px; }
.dots3 { width: 21px; }
.spin { display: flex; flex-direction: column; width: 15px; gap: 1px; }
.spin button { height: 9px; border: 1px solid #d0d0d0; border-right-color: #808080; border-bottom-color: #808080; background: #f0f0f0; font-size: 9px; line-height: 6px; }
.off { color: #838383; }
.limit { display: flex; justify-content: space-between; height: 17px; }
.limit .btn { width: 39px; height: 16px; line-height: 13px; }
.deal { display: flex; gap: 11px; }
.checks { width: 38px; padding-top: 7px; }
.checks label { display: flex; height: 16px; }
.buy, .sell { width: 78px; height: 57px; border: 1px solid #0078d7; background: #e5f1fb linear-gradient(#a0a0a0, #a0a0a0) no-repeat center 28px / 68px 1px; padding-top: 26px; font: 20px/26px "Noto Sans CJK SC", serif; color: #ff4040; }
.sell { color: #29a329; }

label { display: inline-flex; align-items: center; }
input[type=checkbox], input[type=radio] { appearance: none; width: 13px; height: 13px; flex: none; border: 1px solid #333; margin-right: 3px; padding: 0; background: #fff; display: block; }
input[type=radio] { border-radius: 50%; margin-right: 2px; }
input[type=checkbox]:disabled { border-color: #ccc; }
input[type=checkbox]:checked::after { content: ""; display: block; width: 8px; height: 5px; margin: 2px 0 0 1px; border: 1px solid #222; border-top: none; border-right: none; transform: rotate(-48deg); }
input[type=radio]:checked::after { content: ""; display: block; width: 7px; height: 7px; margin: 2px; border-radius: 50%; background: #222; }

.tabs { height: 29px; align-items: flex-start; font: 13px/26px "Noto Sans CJK SC", sans-serif; }
.arrow { width: 16px; height: 15px; margin: 8px 2px 0 1px; border: 1px solid #fff; border-right-color: #555; border-bottom-color: #555; background: #f0f0f0; display: flex; align-items: center; justify-content: center; }
.arrow svg { width: 6px; height: 10px; }
.arrow.end { margin-left: auto; margin-right: 6px; }
.slope { width: 30px; height: 28px; }
.tab { height: 28px; width: 78px; border: 1px solid #999; border-left: none; border-bottom-left-radius: 5px; background: #f0f0f0; line-height: 24px; }
.tab.short { width: 52px; }
.tab.on { background: #fff; border-top-color: #fff; border-radius: 0; width: 84px; padding-right: 4px; }
.tab.on.short { width: 44px; padding-right: 0; }
.collapse { width: 10px; border: none; background: none; }
.collapse svg { width: 8px; height: 14px; }

.lists { flex: 1; min-width: 0; }
.list-tools { height: 23px; gap: 7px; padding-left: 6px; align-items: flex-start; padding-top: 1px; }
.list-tools .btn { width: 68px; height: 20px; flex: none; font: 13px/16px "Noto Sans CJK SC", sans-serif; }
.list-tools .small { width: 38px; } .list-tools .mid { width: 48px; } .list-tools .gap { margin-left: 79px; }
.list-row { display: flex; gap: 5px; }
.positions { width: 507px; flex: none; }
.orders { flex: 1; min-width: 0; }
.frame { height: 149px; border: 1px solid #999; background: #fff; padding: 2px; overflow: hidden; position: relative; }
.positions .frame { border-right: none; padding: 1px 0 0 1px; }
.grid { border-collapse: collapse; width: 100%; table-layout: fixed; font: 12px/16px "Noto Sans CJK SC", sans-serif; }
.grid th { height: 21px; padding: 0 0 0 5px; text-align: left; font-weight: normal; white-space: nowrap; border-right: 1px solid #999; border-bottom: 1px solid #999; background: #fff; }
.grid td { height: 21px; padding: 0 0 0 5px; border-right: 1px solid #f0f0f0; border-bottom: 1px solid #f0f0f0; white-space: nowrap; }
.grid th:last-child, .grid td:last-child { border-right: none; }
.c12 { width: 12px; } .c25 { width: 25px; } .c40 { width: 40px; } .c42 { width: 42px; } .c45 { width: 45px; } .c55 { width: 55px; } .c60 { width: 60px; } .c65 { width: 65px; } .c75 { width: 75px; } .c80 { width: 80px; } .c88 { width: 88px; } .c90 { width: 90px; } .c100 { width: 100px; } .c135 { width: 135px; }
.hbar { position: absolute; left: 1px; right: 1px; bottom: 1px; height: 16px; display: flex; align-items: center; background: #f0f0f0; padding: 0 4px; }
.hbar svg { width: 8px; height: 10px; }
.hbar svg:last-child { margin-left: auto; }
.hbar i { width: 120px; height: 15px; margin-left: 5px; background: #cdcdcd; }
.hbar .wide { width: 282px; }
.acct-tab { height: 29px; padding-top: 2px; }
.acct-tab button { width: 102px; height: 27px; border: none; background: #f8f8f8; border-right: 1px solid #999; font: 14px/20px "Noto Sans", sans-serif; }
.acct-tab span { flex: 1; height: 27px; border: 1px solid #999; border-left: none; border-top-color: #fff; }

/* status */
.status { height: 20px; flex: none; gap: 3px; padding-left: 3px; font: 13px/18px "Noto Sans", "Noto Sans CJK SC", sans-serif; }
.indexes { flex: 1; display: grid; grid-template-columns: 530px 530px 1fr; height: 20px; border: 1px solid #999; border-bottom: none; border-right: none; background: #fff; font-size: 14px; }
.index { gap: 9px; padding-left: 3px; }
.index em { color: #1c8000; }
.meter { width: 149px; }
.meter p { display: flex; }
.meter p:first-child { height: 12px; border: 1px solid #000; }
.meter p:first-child i { flex: 1; background: #f00; }
.meter p:first-child i + i { background: #1c8000; border-left: 1px solid #000; }
.meter p + p { justify-content: space-between; margin-top: 2px; }
.meter p + p i { width: 10px; height: 4px; background: #1c8000; }
.meter p + p .r { background: #f00; }
.cell { width: 28px; height: 20px; border: 1px solid #999; border-right: none; border-bottom: none; display: flex; align-items: center; justify-content: center; }
.cell svg { width: 14px; height: 15px; }
.news { width: 83px; gap: 2px; }
.news svg { width: 12px; }
.tail { width: 179px; }
.taskbar { height: 8px; flex: none; overflow: hidden; background: #1d2f3d; display: flex; padding-left: 295px; color: #fff; font: 12px/16px "Noto Sans", sans-serif; }
.taskbar i { width: 48px; background: #42525e; }
.taskbar span { margin: 2px 74px 0 auto; }
.ime { position: absolute; right: 0; bottom: 8px; width: 178px; height: 26px; display: flex; align-items: center; justify-content: space-between; padding: 0 4px 0 0; background: linear-gradient(90deg, #fff 85%, #e0f8fc); border: 1px solid #c8d4f0; color: #0070e0; font: 15px/20px "Noto Sans CJK SC", sans-serif; }
.ime svg { width: 16px; height: 16px; }
.ime .sogou { width: 32px; height: 30px; margin: -5px 0 0 -2px; }

/* windows */
.window { position: absolute; background: #f0f0f0; border: 1px solid #888; box-shadow: 0 2px 12px rgba(0,0,0,.45); display: flex; flex-direction: column; }
.caption { height: 25px; flex: none; padding: 0 9px 0 3px; background: #fff; font: 12px/18px "Noto Sans CJK SC", sans-serif; }
.faded { color: #999; }
.x { width: 11px; height: 11px; margin-left: auto; color: #333; }
.faded .x { color: #888; }
.alert-win { left: 608px; top: 252px; width: 926px; height: 577px; border-color: #444 #aaa #aaa #444; }
.alert-win .caption { height: 30px; padding: 0 17px 2px 10px; }
.bell { width: 13px; height: 14px; margin-right: 6px; }
.ctl { width: 102px; height: 12px; margin-left: auto; }
.win-menu { height: 18px; gap: 14px; padding: 2px 8px 0; background: #fff; color: #666; font: 12px/14px "Noto Sans", "Noto Sans CJK SC", sans-serif; }
.alert-body { display: flex; gap: 12px; padding: 8px 10px 0 11px; }
.alert-main { flex: 1; }
.alert-main p { height: 27px; line-height: 18px; }
.alert-list, .log { position: relative; overflow: hidden; background: #fff; border: 1px solid #828790; outline: 1px solid #fff; outline-offset: -2px; padding: 3px 2px; }
.alert-list { height: 233px; }
.grid.fine th { height: 23px; }
.fine td { height: 16px; line-height: 14px; }
.fine th, .fine td { padding-left: 4px; }
.fine .sel { background: #f0f0f0; }
.fine td input[type=checkbox] { margin: 0 4px 0 0; }
.split span:last-child { float: right; }
.alert-side { display: flex; flex-direction: column; width: 102px; flex: none; }
.alert-side .btn { margin: 0 0 12px 2px; height: 19px; width: 100px; }
.alert-side .btn.tall { height: 27px; margin: 0 0 9px; }
.alert-side .btn.taller { height: 36px; margin-bottom: 7px; line-height: 12px; }
.alert-side .btn:disabled { margin-bottom: 16px; }
.log { height: 206px; margin: 22px 10px 0 11px; }
.alert-foot { display: flex; align-items: center; height: 31px; padding-left: 11px; gap: 7px; }
.alert-foot input:disabled { width: 44px; }
.tick { margin-left: 8px; }

.cond-win { left: 769px; top: 287px; width: 605px; height: 513px; }
.cond-win .caption { padding-bottom: 2px; }
.cond-body { display: flex; }
.cond-left { width: 343px; flex: none; padding: 5px 0 0 20px; }
.row { gap: 6px; height: 24px; }
.cond-left > .row:first-child, .strategy { height: 21px; gap: 5px; }
.key { width: 52px; }
.note { width: 30px; }
.strategy { margin-top: 10px; width: 319px; white-space: pre; }
.grow { flex: 1; }
fieldset { margin: 0; border: 1px solid #dcdcdc; min-width: 0; }
legend { height: 14px; line-height: 14px; padding: 0 3px; }
.signal { height: 47px; width: 314px; margin-top: 26px; padding: 5px 0 0 11px; }
.signal legend { margin-left: -6px; }
.signal .row, .calc { height: 20px; }
.signal .btn { width: 26px; height: 17px; }
.opt { width: 64px; }
.late { margin-left: 11px; }
.calc { margin-top: 13px; }
.indent { padding-left: 12px; }
.right-check { width: 85px; }
.off + .w39 { margin-left: 4px; }
.symbols { width: 330px; height: 185px; margin: 7px 0 0 -9px; padding: 5px 0 0 9px; }
.symbols legend { margin-left: -4px; }
.pick { display: flex; gap: 14px; }
.pick ul { width: 219px; height: 153px; border: 1px solid #828790; background: #fff; padding: 2px 6px; }
.pick b { color: #f00; font-family: "Liberation Sans", sans-serif; margin-right: 2px; }
.pick-btns { display: flex; flex-direction: column; justify-content: space-between; height: 158px; }
.pick-btns .btn { width: 74px; height: 20px; }
.confirm { display: flex; gap: 39px; margin: 8px 0 0 130px; }
.confirm .btn { width: 73px; height: 43px; }
.fold { width: 22px; height: 40px; margin-top: 178px; }
.cond-right { width: 205px; margin-left: 31px; padding-top: 4px; }
.cond-right > label { display: flex; height: 20px; padding-left: 5px; }
.cond-right > .r18 { height: 18px; }
hr { height: 2px; margin: 7px 0 4px; border: none; border-top: 1px solid #a0a0a0; background: #fff; }
.cond-right hr { margin-bottom: 3px; }
.coord { margin: 12px 0 14px; padding-left: 5px; height: 21px; }
.coord label { width: 43px; }
.coord select { width: 111px; }
.coord + hr { margin: 0 0 2px; }
.times { padding-left: 11px; height: 23px; margin-bottom: 5px; gap: 7px; }
.time { display: flex; align-items: center; width: 80px; height: 23px; border: 1px solid #7a7a7a; background: #fff; padding-right: 2px; }
.time input { flex: 1; border: none; height: 19px; width: 60px; color: #777; }
.send { padding-left: 5px; justify-content: space-between; width: 190px; }
.send .btn { width: 73px; }
.group { padding-left: 23px; height: 21px; }
.group input { width: 60px; }
.sound { padding-left: 8px; height: 21px; }
.sound input { width: 158px; }
.sound .btn { width: 25px; }
.cond-right .far { margin: 18px 0 12px; }
.filter, .reset { display: block; width: 123px; margin-left: 6px; }
.reset { width: 73px; margin-top: 10px; }

.formula-win { left: 35px; top: 455px; width: 734px; height: 347px; border-color: #555; }
.formula-win .caption { padding-bottom: 2px; }
.formula-body { display: flex; gap: 21px; padding: 14px 10px 0 11px; }
.formula-left { width: 450px; }
.formula-left p, .formula-right p { height: 18px; }
.panes { display: flex; gap: 5px; }
.tree-pane { width: 185px; }
.list-pane { width: 261px; }
.box { position: relative; height: 230px; border: 1px solid #828790; background: #fff; overflow: hidden; }
.tree { height: 210px; margin: 1px 16px 0 2px; overflow: hidden; background: repeating-linear-gradient(#888 0 1px, transparent 1px 2px) no-repeat 11px 0 / 1px 100%; }
.tree li { display: flex; align-items: center; height: 18px; padding-left: 19px; }
.tree .root { padding-left: 0; }
.tree svg:first-child { width: 21px; height: 18px; }
.tree svg { width: 17px; height: 13px; }
.tree span { padding: 0 2px; margin-left: 2px; }
.tree .active span { background: #0078d7; color: #fff; outline: 1px dotted #f80; outline-offset: -1px; }
.vbar { position: absolute; right: 1px; top: 1px; bottom: 1px; width: 16px; background: #f0f0f0; display: flex; flex-direction: column; align-items: center; padding: 6px 0 5px; color: #555; }
.vbar svg { width: 10px; height: 8px; }
.vbar svg:last-child { margin-top: auto; }
.vbar i { width: 15px; height: 113px; margin-top: 24px; background: #cdcdcd; }
.tree-box .vbar { bottom: 18px; }
.tree-box .hbar i { width: 124px; margin-right: 10px; }
.tree-box .hbar { padding-right: 21px; }
.list-box .hbar i { width: 101px; }
.formulas { width: 255px; margin: 3px 0 0 2px; border-collapse: collapse; table-layout: fixed; color: #00f; }
.formulas th { height: 23px; padding: 0 0 0 5px; border-bottom: 1px solid #999; border-right: 1px solid #999; color: #000; font: 12px/18px "Noto Sans CJK SC", sans-serif; text-align: left; }
.formulas th:last-child { border-right: none; }
.formulas th i { float: right; margin-right: 10px; color: #999; font: 9px/18px "Liberation Sans", sans-serif; }
.formulas td { height: 17px; padding: 0 0 0 5px; line-height: 15px; white-space: nowrap; }
.formulas td:first-child { padding-left: 4px; }
.formulas td svg { width: 14px; height: 14px; float: left; margin-right: 2px; }
.formulas .sel { background: #f0f0f0; color: #000; }
.formula-left hr { margin: 13px 0 12px; }
.formula-btns { display: flex; justify-content: flex-end; gap: 7px; }
.formula-btns .btn { width: 73px; height: 19px; }
.btn.primary { border: 2px solid #0078d7; line-height: 13px; }
.params { position: relative; width: 240px; height: 159px; margin-bottom: 2px; border: 1px solid #7a7a7a; outline: 1px solid #fff; outline-offset: -2px; padding: 1px 2px; font-size: 14px; }
.params .vbar { color: #bbb; border-left: 1px solid #fff; width: 17px; }
.formula-right .row { height: 21px; margin-bottom: 3px; gap: 4px; }
.formula-right .row label { width: 71px; }
.today { margin: 21px 0 0 4px; }
```

FILE: script.js
```js
// small drawing helpers: stroke path, fill path
const s = (d, c = '#000', w = 1) => `<path d="${d}" fill="none" stroke="${c}" stroke-width="${w}"/>`;
const f = (d, c = '#000') => `<path d="${d}" fill="${c}"/>`;
const t = (str, x, y, size, c = '#000') => `<text x="${x}" y="${y}" font-size="${size}" font-weight="bold" fill="${c}">${str}</text>`;
const B = '#00f', G = '#888', N = '#000084';

const spark = s('M3.5 0v7M0 3.500h7M1 1l5 5M6 1L1 6', '#d8c800');
const graySpark = spark.replace('#d8c800', '#bbb');
const sheet = c => s('M5.500 5.500h11v11h-11zM5 8.500h12M5 11.500h12M5 14.500h12M9.500 6v10M13.500 6v10', c);
const form = c => f('M2 2h14v3H2z', c) + s('M1.500 2.500h15v13h-15zM4 7.500h4M4 10.500h4M4 13h4M10 7.500h4v2h-4zM10 12.500h4', c);
const scroll = c => f('M4 2h13v4h-2v-2h-1v8h2v4H2v-4h3V6H3z', c) + s('M7 6h5M7 8.500h5M7 11h5', '#ddd');
const copy = (c, x) => f('M2 3h5l1 2h5v7H2z', '#aaa') + '<path d="M5.500 7.500h4l1 2h5v6h-10z" fill="#ccc" stroke="#888"/>' + s(x, c);
const zoom = (sign, c) => s('M12 12l5 5', N, 2) + '<circle cx="7.500" cy="7.500" r="5.500" fill="#eef" stroke="#556"/>' + s('M5 7.500h5' + sign, c, 2);
const arrowDown = s('M14.500 4v11M12 12l2.500 3 2.500-3', G);

const drawIcons = [
  ['新表格', spark + sheet(N)],
  ['新列表', graySpark + s('M6.500 5.500h10v11h-10zM9 8h5l-5 6h5', G)],
  ['新画面', spark + s('M4.500 5.500h12v11h-12zM7 9h3M12 8.500h3v2h-3zM7 13h3M12 12.500h3v2h-3z')],
  ['新文档', graySpark + scroll(G)],
  ['新窗体', spark + f('M6 5h11v3H6z', N) + s('M6.500 5.500h10v11h-10zM9 11.500h5v3H9z', N)],
  ['新图形', s('M2 2l9 8M10 1l-7 8', '#e8e000', 3) + f('M11 5h5v4h-5zM3 11h4v4H3z', '#c00') + f('M7 10h4v3H7zM12 12h5v4h-5z', '#080')],
  ['闹钟', spark + '<circle cx="11" cy="10" r="5.500" fill="#fff" stroke="#000" stroke-width="2"/>' + s('M11 7v3l3 2', '#c00') + s('M5 4l3-2M14 3l3 3', '#444', 2)],
  null,
  ['表格', s('M1.500 2.500h15v13h-15zM2 5.500h14M2 8.500h14M2 11.500h14M6.500 3v12M11.500 3v12', G)],
  ['列表', form(G)],
  ['公式', s('M4 8H1.500v8.500h14V8H13M12 3V1.500H6l3 3-3 3h6V6M4 11h9M4 14h9', G)],
  ['窗格', s('M1.500 2.500h15v13h-15zM2 6.500h14M4.500 9.500h9v3h-9zM7.500 7v8', G)],
  ['文档', scroll(G)],
  null,
  ['升序', t('A', 2, 7, 8, G) + t('Z', 2, 17, 8, G) + arrowDown],
  ['降序', t('Z', 2, 7, 8, G) + t('A', 2, 17, 8, G) + arrowDown],
  null,
  ['折线', s('M1.500 1v15.500H17M3 13l5-6 4 4 5-6M8 12l4-5', G)],
  ['柱图', s('M1.500 1v15.500H17', G) + s('M5 8v8M9 5v11M13 10v6M16 2v14', G, 2)],
  null,
  ['报价', f('M1 2h16v3H1z', N) + s('M1.500 2.500h15v13h-15zM4 8h2M8 8h6M4 10.500h2M8 10.500h6M4 13h2M8 13h6')],
  ['报价2', s('M1.500 2.500h15v13h-15zM4 6h4M10 5.500h4v3h-4zM4 12h4M10 11.500h4v2h-4z', G)],
  null,
  ['复制', copy(G, '')],
  ['复制右', copy(G, 'M11 3h4v4M13 5l2 2 2-2')],
  ['复制全', copy(G, 'M2 1h8M11 3h4v4M13 5l2 2 2-2')],
  null,
  ['新建', '<path d="M4.500 2.500h6l4 4v9h-10z" fill="#fff" stroke="#000"/>' + s('M10.500 3v4h4')],
  ['删除', s('M3 3l11 13M15 3L3 15', '#777', 2)],
  ['查找', f('M4 2h3l1 5h2l1-5h3l3 13h-6v-5H8v5H1z', '#666') + s('M4 8v5M14 8v5', '#ccc')],
  ['查找下一个', f('M2 2h8v5H2z', '#999') + f('M8 7h2v3h2V7h2l3 9h-4v-3h-2v3H6z', '#666')],
  ['打印', s('M5 6l2-4h8l-2 4M2.500 7.500h13v5h-13zM4 12v4h10v-4') + f('M3 8h12v3H3z', '#555') + f('M12 9h2v1h-2z', '#0c0')],
  ['预览', '<path d="M2 7l6-5 8 5v9H4z" fill="#ff6" stroke="#000"/>' + s('M5 8l7-6v6l-5 4z', N)],
  ['模板', f('M3 2h13l-2 7H1z', '#2a8a8a') + s('M3.500 6.500h10v10h-10z') + s('M6 11h6M6 13h6', G)],
  ['结构', s('M1.500 7.500h5v5h-5zM10.500 1.500h6v5h-6zM10.500 11.500h6v5h-6zM7 10h3V4M10 14H8v-4', N)],
  ['放大', zoom('M7.500 5v5', '#a00')],
  ['缩小', zoom('', '#080')],
  ['K线', f('M3 5h4v9H3zM10 3h4v11h-4z', G) + s('M5 3v13M12 1v16', G)],
  ['波动', s('M2 11l4-5 5 5 5-6', G)],
  null,
  ['画笔', f('M6 11l5-9 3 2-5 9-4 3z', '#e8d800') + f('M11 1l3 1v4l-4-2z', '#800') + s('M9 12l5-8M5 16l1-4', '#000') + s('M9 16l7-7', N), 'on'],
  ['线段', s('M2 16L16 2', B) + f('M1 15h2v2H1zM15 1h2v2h-2z')],
  ['直线', s('M1 17L17 1', B) + f('M8 8h3v3H8zM13 3h2v2h-2z')],
  ['射线', s('M3 15L15 3', B) + s('M2 16l5-6')],
  ['水平线', s('M2 9.500h14', B) + f('M8 8h3v3H8z')],
  ['垂直线', s('M9.500 2v15', B) + f('M8 8h3v3H8z')],
  ['箭头', s('M3 15L15 3', B) + s('M10 3h5v5')],
  ['上升浪', s('M1 15l4-6 2 5 4-8 2 3 4-7') + s('M3 14l2-5', B)],
  ['下降浪', s('M1 2l3 7 2-3 5 7', B) + s('M10 6l3 7 1-3 3 6')],
  ['八浪', s('M0 14l3-5 1 5 4-12 2 7 2-3 2 4 3-6')],
  ['三浪', s('M1 15l3-6 2 5 3-9 3 9 2-4 3 6')],
  ['W底', s('M1 3l4 12 3-9 3 8') + s('M11 14l5-11', G)],
  ['弧线', s('M3 3q12-2 12 6M15 9q-5 6-12 7') + f('M1 1h3v3H1zM1 14h3v3H1z', N)],
  ['折返', s('M3 3l11 4L4 11l11 5', B)],
  ['星形', s('M1 7l5 1 3-6 2 6h6l-4 4 2 5-5-2-5 3V12z', B).replace('/>', ' stroke-dasharray="2 1"/>')],
  ['对称', s('M2 4.500h14M2 8.500h14M2 12.500h14', B) + s('M9.500 1v16M7 3h5M7 15h5')],
  ['黄金G', s('M1 2.500h15M1 15.500h15', B) + t('G', 1, 13, 10) + f('M10 7h3v3h-3z', N)],
  ['黄金GG', s('M1 2.500h15M1 15.500h15', B) + t('G', 1, 13, 10) + f('M9 7h3v3H9zM13 7h3v3h-3z', N)],
  ['区间', s('M2 5h11L2 16h11') + s('M4 2h13v14', '#000').replace('/>', ' stroke-dasharray="2 1"/>')],
  ['Z形', s('M2 2.500h13M2 16.500h13', '#000') + s('M14 3L3 16', B)],
  ['标尺', s('M1 16l9-9v9') + s('M13.500 1v16M10 3h7M10 7h7M10 11h7M10 15h7', B)],
  ['叉线', s('M1 2l5 13 3-8', B) + s('M6 15l5-13 3 10 3-5')],
  ['通道标', s('M1 2.500h16M1 16.500h16', '#000') + s('M2 9.500h15', B) + s('M9.500 3v13M7 6l2.500-3L12 6', '#088')],
  ['三角', s('M2 10L16 2l-6 14zM2 10l8 6')],
  ['角度', s('M2 15L13 2M2 15.500h13M8 8l3 8', B)],
  ['扇形', f('M2 3h9v13H2z', '#99c') + s('M2.500 1v15.500H17M3 16L17 4M3 16L10 2M3 16l14-6', B)],
  ['速阻线', s('M2 16L16 2M2 16L9 5') + s('M2 16l15-4M2 16L16 8', B)],
  ['平行一', s('M2.500 2v14M16.500 2v14', '#000') + s('M3 12l13-7', B)],
  ['平行二', s('M2.500 2v14M16.500 2v14', '#000') + s('M3 8l13-5M3 12l13-5M3 16l13-5', B)],
  ['平行三', s('M1 12L11 1M2 16L14 3M7 16l9-10') + t('E', 11, 17, 8)],
  ['通道上', s('M3 7l11-5', '#000') + s('M3 15l11-5', B)],
  ['通道下', s('M2 2l12 6', B) + s('M2 9l12 6')],
  ['回归', s('M1 15l16-8', B) + s('M2 16l5-9 2 4 4-6 3 5', '#666')],
  ['竖线1', s('M2.500 1v16M5.500 1v16M8.500 1v16M12.500 1v16M16.500 1v16')],
  ['竖线2', s('M1.500 1v16M3.500 1v16M6.500 1v16', B) + s('M10.500 1v16M13.500 1v16M16.500 1v16').replace('/>', ' stroke-dasharray="1 1"/>')],
  ['竖线3', s('M2.500 1v16M5.500 1v16', B) + s('M9.500 1v16M12.500 1v16M16.500 1v16', '#444').replace('/>', ' stroke-dasharray="1 1"/>')],
  ['黄金竖', t('G', 0, 14, 12) + s('M11.500 1v16M15.500 1v16', B)],
  ['时间T', s('M1.500 3v13M16.500 3v13M1 11.500h16M4 3.500h10v5H4zM6 5h5M8.500 5v5')],
  ['时间H', s('M2.500 10v6M5.500 10v6M2 12.500h7', B) + s('M9.500 5v11M13.500 5v11M16.500 2v15M9 9.500h8')],
  ['周期线', s('M3.500 1v16', '#000') + s('M9.500 1v16M13.500 1v16', B)],
  ['甘氏', s('M2 6l7 8V2') + s('M9 14l7-9', B)],
  ['圆环', '<ellipse cx="9" cy="9" rx="7" ry="8"/><ellipse cx="9" cy="9" rx="4" ry="6" fill="#88f" stroke="#fff"/>' + s('M8 6v6M10 6v6', B)],
  ['斜线1', s('M2 6l13-5M2 10l13-5M2 14l13-5M5 17l10-5', '#333')],
  ['斜线2', s('M1 12L12 1', B) + s('M1 17L17 1M7 17L17 7')],
  ['网格', s('M1 1l16 16M17 1L1 17M1 9l8 8M9 1l8 8M1 9l8-8M9 17l8-8M1 5l12 12M5 1l12 12M5 17L17 5M1 13L13 1', '#555')],
  ['文本框', s('M2 3v13h14V3M2 3h3M13 3h3', B) + t('T', 6, 9, 9)],
  ['矩形', s('M2.500 2.500h13v7h-13z', B) + f('M2 13h14v3H2z')],
  ['三角形', s('M9 4l6 8.500') + s('M9 4L3 12.500h12', B)],
  ['平行四边形', s('M5 3h12l-4 11H1z')],
  ['椭圆', '<ellipse cx="9" cy="9" rx="8" ry="6" fill="none" stroke="#00f"/>'],
];

const box = 'M2.500 2.500h13v13h-13z';
const chartIcons = [
  ['首页', s('M1 9l8-7 8 7M3.500 8v8.500h4V11h3v5.500h4V8', '#000', 1.5)],
  null,
  ['标尺', s('M2 13L12 2l4 4L6 16zM5 12l2 2M8 8l2 2M11 5l2 2'), 'on'],
  ['下载', s('M9 2v9M5 8l4 4 4-4M2 11v5h14v-5', '#000', 1.5)],
  ['刷新', s('M4 13Q0 5 8 3l3 1M14 5q4 8-4 10l-3-1', '#000', 3) + s('M8 3v5M10 15v-5')],
  ['布局', s('M2.500 2.500h5v5h-5zM10.500 2.500h5v5h-5zM2.500 10.500h5v5h-5zM10.500 10.500h5v5h-5z'), 'drop'],
  null,
  ['K线', f('M2 8h3v5H2z') + s('M3.500 5v11M9.500 1v14M15.500 1v15') + '<path d="M8.500 4.500h2v7h-2zM14.500 4.500h2v9h-2z" fill="#f0f0f0" stroke="#000"/>'],
  ['提醒', s('M9 1l8 8-8 8-8-8z') + s('M9 5v5M9 12v2', '#000', 2)],
  ['编辑', s('M10 2H2.500v13h12V8') + s('M7 11l9-9', '#000', 3) + s('M5 13l3-1')],
  null,
  ['播放', '<circle cx="9" cy="9" r="7.500" fill="none" stroke="#000"/>' + f('M7 5l5 4-5 4z')],
  ['笔记', s('M2.500 1.500h13v10l-4 4h-9zM5 5h8M5 8h8M5 11h4M11 16v-4h4')],
  ['资金', t('$', 5, 15, 16), 'on drop'],
  ['筛选', s('M2 2.500h10l-3 4v9H6v-9zM12 9h4M12 12h4M12 15h4', '#000', 1.5)],
  ['排序', s(box + 'M6 13V6M4 8l2-3 2 3M12 5v7M10 10l2 3 2-3')],
  null,
  ['移动', f('M9 0l3 4H6zM9 18l3-4H6zM0 9l4-3v6zM18 9l-4-3v6zM7 7h4v4H7z')],
  ['刻度', s('M5.500 1.500h7v15h-7zM9 4.500h3M9 7.500h3M9 10.500h3M9 13.500h3')],
  ['放大', '<circle cx="8" cy="8" r="6" fill="none" stroke="#000"/>' + s('M12 12l5 5M5 8h6M8 5v6', '#000', 1.5)],
  ['缩小', '<circle cx="8" cy="8" r="6" fill="none" stroke="#000"/>' + s('M12 12l5 5M5 8h6', '#000', 1.5)],
  null,
  ['设置', s('M7 1.500h4l1 2 2.500 1 2-.5 .5 4-1.500 1.500L17 13l-3 1.500-2-.5-1 2.500H7L6 14l-2 .5L1 12.500l1.500-3L1 7l1-3 3 .5L6 3.500z') + '<circle cx="9" cy="9" r="2.500" fill="none" stroke="#000"/>'],
  'tail', 'grip',
  ['选择', f('M5 1v14l3-3 3 5 2-1-2-5h5z'), 'on'],
  null,
  ['直线', s('M3 15L15 2'), 'drop'],
  ['百分比', '%', 'drop'],
  ['竖排', s(box + 'M5.500 5v8M8.500 5v8M12.500 5v8'), 'drop'],
  ['角', s('M3 15L13 3M3 15h13M9 8l3 6', '#000', 2), 'drop'],
  ['横排', s('M3.500 2v14M15.500 2v14M6 4h7M6 7h7M6 10h7M6 13h7'), 'drop'],
  ['网格', s('M5.500 2v14M9.500 2v14M13.500 2v14M2 5.500h15M2 9.500h15M2 13.500h15'), 'drop'],
  ['方形', s(box), 'drop'],
  ['圆形', '<circle cx="9" cy="9" r="6.500" fill="none" stroke="#000"/>', 'drop'],
  ['文字', 'A'],
  null,
  ['磁铁', s('M4 2v8q0 5 5 5t5-5V2', '#000', 3) + s('M2 6h4M12 6h4', '#f0f0f0')],
  ['重叠', '<circle cx="10" cy="7" r="5.500" fill="none" stroke="#000"/>' + s('M4 6H2.500v7q0 3 3 3h5q2 0 2-3M7 7h6')],
  ['清除', s('M4 4l10 10M14 4L4 14', G, 2)],
  ['回收', s('M2 4.500h14M6 4V2h6v2M4.500 5v11h9V5M7 8v6M9 8v6M11 8v6', G)],
  ['锁', s('M3.500 7.500h11v8h-11zM6 7V4q3-3 6 0v3M9 10v3')],
  ['颜色', t('A', 4, 12, 13) + f('M3 14h12v3H3z', '#e00'), 'drop'],
  ['保存', s('M2.500 2.500h13v13h-10l-3-3zM6 3v5h6V3'), 'drop'],
  null,
  ['买', '买'], ['卖', '卖'], ['平', '平'], ['反', '反'],
  'tail', 'grip',
];

function fillBar(id, items) {
  document.getElementById(id).innerHTML = items.map(item => {
    if (item === null) return '<span class="sep"></span>';
    if (item === 'tail') return '<span class="tail-arrow"></span>';
    if (item === 'grip') return '<span class="grip"></span>';
    const [name, art, cls = ''] = item;
    const body = art[0] === '<' ? `<svg viewBox="0 0 18 18">${art}</svg>` : art;
    return `<button class="tool ${cls}" aria-label="${name}">${body}</button>`;
  }).join('');
}

fillBar('drawBar', drawIcons);
fillBar('chartBar', chartIcons);

// overflow mark at the end of the drawing bar
document.getElementById('drawBar').insertAdjacentHTML('beforeend',
  `<svg width="28" height="22" viewBox="-8 0 28 22">${s('M8 2l3 3-3 3M12 2l3 3-3 3', '#000', 2)}${f('M9 16h7l-3.500 4z')}</svg>`);

// empty grid rows
document.querySelectorAll('table[data-blank]').forEach(table => {
  const cells = table.querySelectorAll('th').length;
  for (let i = 0; i < table.dataset.blank; i++) {
    table.tBodies[0].insertAdjacentHTML('beforeend', `<tr>${'<td></td>'.repeat(cells)}</tr>`);
  }
});
```
